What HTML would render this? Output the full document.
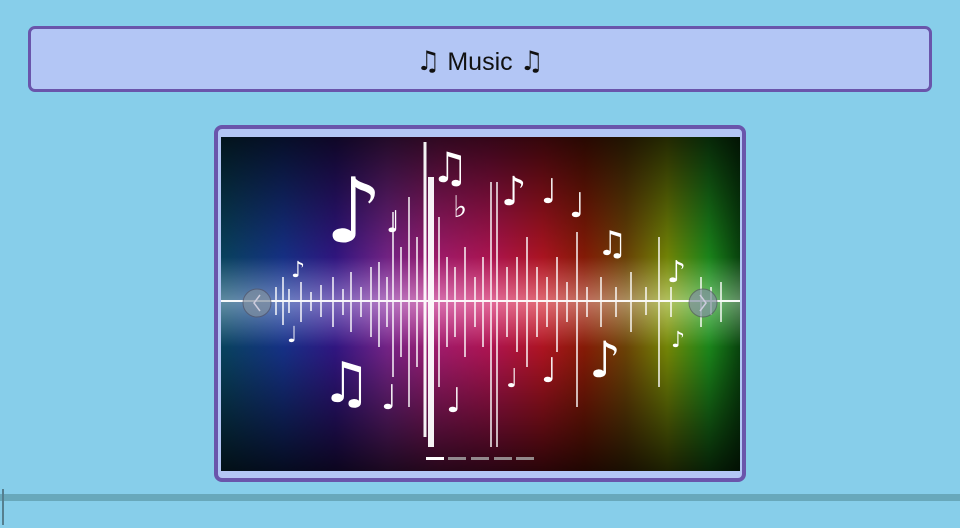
<!DOCTYPE html>
<html><head><meta charset="utf-8"><style>
html,body{margin:0;padding:0;}
body{width:960px;height:528px;background:#87ceea;position:relative;overflow:hidden;font-family:"Liberation Sans","DejaVu Sans",sans-serif;}
.hdr{position:absolute;left:28px;top:26px;width:898px;height:60px;border:3px solid #6a55ab;border-radius:7px;background:#b3c6f5;text-align:center;line-height:66px;font-size:25px;color:#111;}
.hdr b{font-family:"DejaVu Sans",sans-serif;font-size:27px;}
.card{position:absolute;left:214px;top:125px;width:524px;height:349px;border:4px solid #6a55ab;border-radius:8px;background:#b3c6f5;}
.img{position:absolute;left:3px;top:8px;width:519px;height:334px;overflow:hidden;background:#000;}
.bar{position:absolute;left:0;top:494px;width:960px;height:7px;background:#68a8bb;}
.tick{position:absolute;left:2px;top:489px;width:2px;height:36px;background:#557f8f;}
</style></head><body>
<div class="hdr"><b>♫</b> Music <b>♫</b></div>
<div class="card"><div class="img">
<svg width="519" height="334" viewBox="0 0 519 334">
<defs>
<linearGradient id="band" x1="0" x2="1" y1="0" y2="0">
<stop offset="0" stop-color="#0a5070"/><stop offset="0.12" stop-color="#1a3aa0"/><stop offset="0.22" stop-color="#3a1a9a"/><stop offset="0.32" stop-color="#8a2aa0"/><stop offset="0.42" stop-color="#c02080"/><stop offset="0.52" stop-color="#d01860"/><stop offset="0.62" stop-color="#d01828"/><stop offset="0.7" stop-color="#a02008"/><stop offset="0.78" stop-color="#805008"/><stop offset="0.86" stop-color="#8aa008"/><stop offset="0.94" stop-color="#20a020"/><stop offset="1" stop-color="#0a5010"/></linearGradient>
<linearGradient id="dark" x1="0" x2="0" y1="0" y2="1">
<stop offset="0" stop-color="#000" stop-opacity="0.75"/><stop offset="0.35" stop-color="#000" stop-opacity="0.2"/><stop offset="0.5" stop-color="#000" stop-opacity="0"/><stop offset="0.65" stop-color="#000" stop-opacity="0.2"/><stop offset="1" stop-color="#000" stop-opacity="0.8"/></linearGradient>
<linearGradient id="v" x1="0" x2="0" y1="0" y2="1"><stop offset="0" stop-color="#fff" stop-opacity="0"/><stop offset="0.5" stop-color="#fff" stop-opacity="0.35"/><stop offset="1" stop-color="#fff" stop-opacity="0"/></linearGradient>
</defs>
<rect width="519" height="334" fill="url(#band)"/>
<rect width="519" height="334" fill="url(#dark)"/>
<rect x="0" y="120" width="519" height="90" fill="url(#v)"/>
<g stroke="#fff" stroke-width="1.5" opacity="0.95">
<line x1="0" y1="164" x2="519" y2="164" stroke-width="2"/>
<line x1="55" y1="150" x2="55" y2="178"/><line x1="62" y1="140" x2="62" y2="188"/><line x1="68" y1="152" x2="68" y2="176"/>
<line x1="80" y1="145" x2="80" y2="185"/><line x1="90" y1="155" x2="90" y2="174"/><line x1="100" y1="148" x2="100" y2="180"/>
<line x1="112" y1="140" x2="112" y2="190"/><line x1="122" y1="152" x2="122" y2="178"/><line x1="130" y1="135" x2="130" y2="195"/>
<line x1="140" y1="150" x2="140" y2="180"/><line x1="150" y1="130" x2="150" y2="200"/><line x1="158" y1="125" x2="158" y2="210"/>
<line x1="166" y1="140" x2="166" y2="190"/><line x1="172" y1="75" x2="172" y2="240"/><line x1="180" y1="110" x2="180" y2="220"/>
<line x1="188" y1="60" x2="188" y2="270"/><line x1="196" y1="100" x2="196" y2="230"/><line x1="204" y1="5" x2="204" y2="300" stroke-width="3"/>
<line x1="210" y1="40" x2="210" y2="310" stroke-width="6"/><line x1="218" y1="80" x2="218" y2="250"/><line x1="226" y1="120" x2="226" y2="210"/>
<line x1="234" y1="130" x2="234" y2="200"/><line x1="244" y1="110" x2="244" y2="220"/><line x1="254" y1="140" x2="254" y2="190"/>
<line x1="262" y1="120" x2="262" y2="210"/><line x1="270" y1="45" x2="270" y2="310"/><line x1="276" y1="45" x2="276" y2="310"/>
<line x1="286" y1="130" x2="286" y2="200"/><line x1="296" y1="120" x2="296" y2="215"/><line x1="306" y1="100" x2="306" y2="230"/>
<line x1="316" y1="130" x2="316" y2="200"/><line x1="326" y1="140" x2="326" y2="190"/><line x1="336" y1="120" x2="336" y2="215"/>
<line x1="346" y1="145" x2="346" y2="185"/><line x1="356" y1="95" x2="356" y2="270"/><line x1="366" y1="150" x2="366" y2="180"/>
<line x1="380" y1="140" x2="380" y2="190"/><line x1="395" y1="150" x2="395" y2="180"/><line x1="410" y1="135" x2="410" y2="195"/>
<line x1="425" y1="150" x2="425" y2="178"/><line x1="438" y1="100" x2="438" y2="250"/><line x1="450" y1="150" x2="450" y2="180"/>
<line x1="480" y1="140" x2="480" y2="190"/><line x1="490" y1="150" x2="490" y2="178"/><line x1="500" y1="145" x2="500" y2="185"/>
</g>
<g fill="#fff" font-family="DejaVu Sans,sans-serif">
<text x="104" y="105" font-size="90">&#x266A;</text>
<text x="210" y="45" font-size="42">♫</text>
<text x="232" y="80" font-size="30">♭</text>
<text x="280" y="68" font-size="40">♪</text>
<text x="320" y="66" font-size="34">♩</text>
<text x="348" y="80" font-size="34">♩</text>
<text x="165" y="95" font-size="30">♩</text>
<text x="376" y="118" font-size="34">♫</text>
<text x="446" y="145" font-size="30">♪</text>
<text x="100" y="265" font-size="56">♫</text>
<text x="160" y="272" font-size="34">♩</text>
<text x="225" y="275" font-size="34">♩</text>
<text x="285" y="250" font-size="26">♩</text>
<text x="320" y="245" font-size="34">♩</text>
<text x="368" y="240" font-size="50">♪</text>
<text x="70" y="140" font-size="22">♪</text>
<text x="66" y="205" font-size="22">♩</text>
<text x="450" y="210" font-size="22">♪</text>
</g>
<circle cx="36" cy="166" r="14" fill="#8090a0" opacity="0.7" stroke="#556" stroke-width="1"/>
<path d="M39 158 L33 166 L39 174" stroke="#ccd" stroke-width="1.5" fill="none"/>
<circle cx="482" cy="166" r="14" fill="#8090a0" opacity="0.7" stroke="#556" stroke-width="1"/>
<path d="M479 158 L485 166 L479 174" stroke="#ccd" stroke-width="1.5" fill="none"/>
<rect x="205" y="320" width="18" height="3" fill="#fff"/>
<rect x="227" y="320" width="18" height="3" fill="#aaa" opacity="0.8"/>
<rect x="250" y="320" width="18" height="3" fill="#aaa" opacity="0.8"/>
<rect x="273" y="320" width="18" height="3" fill="#aaa" opacity="0.8"/>
<rect x="295" y="320" width="18" height="3" fill="#aaa" opacity="0.8"/>
</svg>
</div></div>
<div class="bar"></div>
<div class="tick"></div>
</body></html>
